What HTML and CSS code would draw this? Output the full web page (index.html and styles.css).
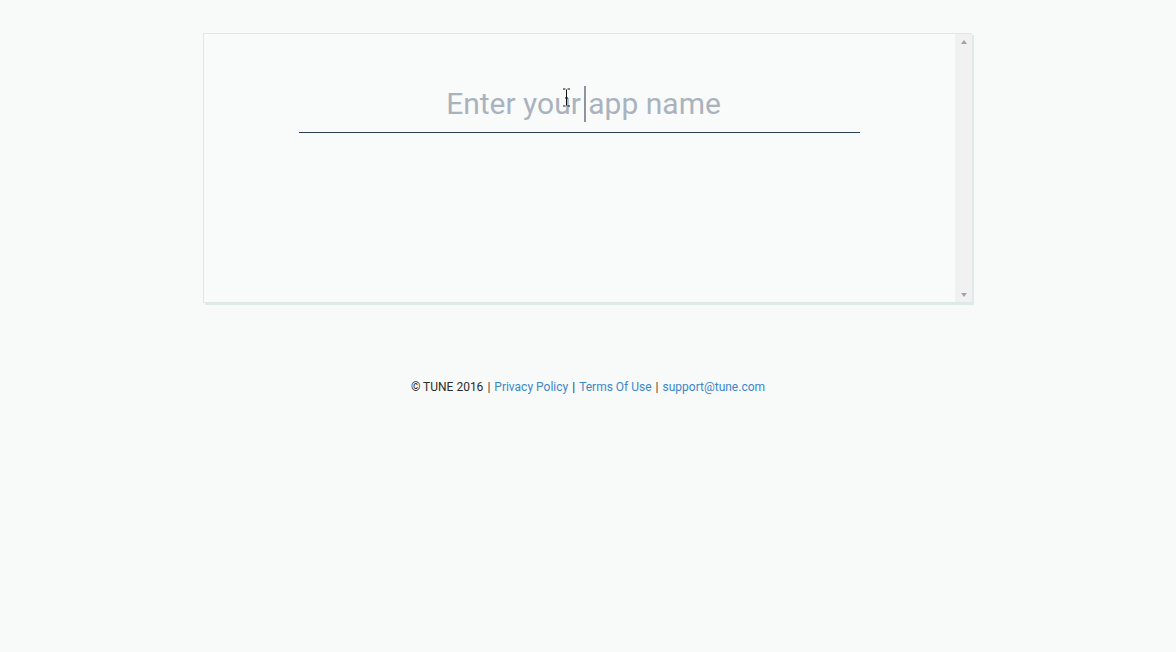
FILE: index.html
```html
<!DOCTYPE html>
<html>
<head>
<meta charset="utf-8">
<link rel="stylesheet" href="styles.css">
</head>
<body>
<div class="page">
  <div class="panel">
    <div class="panel-body">
      <div class="field">
        <input class="app-input" type="text" placeholder="Enter your app name">
        <span class="caret"></span>
        <svg class="ibeam" width="9" height="19" viewBox="0 0 9 19"><path d="M1 1h2.5M5.5 1H8M4.5 1.5v16M1 18h2.5M5.5 18H8M3 10h3" stroke="#111" stroke-width="1" fill="none"/></svg>
      </div>
    </div>
    <div class="scrollbar">
      <span class="arrow up"></span>
      <span class="arrow down"></span>
    </div>
  </div>
  <footer class="footer">
    <span>© TUNE 2016</span><span class="sep">|</span><a href="#">Privacy Policy</a><span class="sep">|</span><a href="#">Terms Of Use</a><span class="sep">|</span><a href="#">support@tune.com</a>
  </footer>
</div>
</body>
</html>
```
FILE: styles.css
```css
html, body {
  margin: 0;
  padding: 0;
  background: #f8fafa;
  font-family: Roboto, "Liberation Sans", sans-serif;
}
.page {
  padding-top: 33px;
  display: flex;
  flex-direction: column;
  align-items: center;
}
.panel {
  width: 769px;
  height: 270px;
  box-sizing: border-box;
  border: 1px solid #dde9e8;
  border-right: none;
  background: #f9fbfb;
  box-shadow: 2px 2px 0 #dfe9e9;
  display: flex;
  margin-left: -1px;
}
.panel-body {
  flex: 1;
  display: flex;
  justify-content: center;
  padding-top: 46px;
}
.field {
  position: relative;
  width: 561px;
  height: 53px;
}
.app-input {
  width: 100%;
  height: 53px;
  box-sizing: border-box;
  border: none;
  border-bottom: 1px solid #2c3e55;
  background: transparent;
  text-align: center;
  font-family: Roboto, "Liberation Sans", sans-serif;
  font-size: 30px;
  font-weight: 400;
  color: #333;
  outline: none;
  padding: 0 0 6px 8px;
  caret-color: transparent;
}
.app-input::placeholder {
  color: #aab3bd;
  opacity: 1;
}
.caret {
  position: absolute;
  left: 285px;
  top: 6px;
  width: 2px;
  height: 36px;
  background: #8d949c;
}
.ibeam {
  position: absolute;
  left: 263px;
  top: 8px;
}
.scrollbar {
  width: 17px;
  background: #f1f1f1;
  display: flex;
  flex-direction: column;
  justify-content: space-between;
  align-items: center;
  padding: 6px 0 5px;
  box-sizing: border-box;
}
.arrow {
  width: 0;
  height: 0;
  border-left: 3.5px solid transparent;
  border-right: 3.5px solid transparent;
}
.arrow.up {
  border-bottom: 4px solid #a3a3a3;
}
.arrow.down {
  border-top: 4px solid #a3a3a3;
}
.footer {
  margin-top: 77px;
  font-size: 12px;
  color: #2b2b2b;
  line-height: 14px;
}
.footer a {
  color: #3a86c8;
  text-decoration: none;
}
.sep {
  margin: 0 4px;
  color: #333;
}
```
